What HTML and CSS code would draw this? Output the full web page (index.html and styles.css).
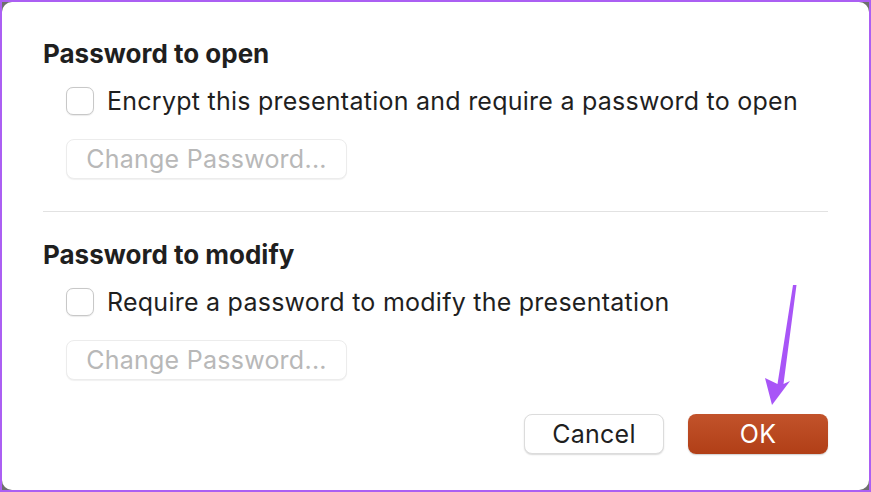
FILE: index.html
```html
<!DOCTYPE html>
<html>
<head>
<meta charset="utf-8">
<link rel="stylesheet" href="styles.css">
</head>
<body>
<div class="screen">
  <div class="dialog">
    <h2 class="heading first">Password to open</h2>
    <label class="check-row">
      <span class="checkbox"></span>
      <span class="check-label">Encrypt this presentation and require a password to open</span>
    </label>
    <button class="btn-disabled">Change Password...</button>
    <div class="separator"></div>
    <h2 class="heading second">Password to modify</h2>
    <label class="check-row">
      <span class="checkbox"></span>
      <span class="check-label">Require a password to modify the presentation</span>
    </label>
    <button class="btn-disabled">Change Password...</button>
    <div class="footer">
      <button class="btn btn-cancel">Cancel</button>
      <button class="btn btn-ok">OK</button>
    </div>
  </div>
  <svg class="arrow" width="871" height="492" viewBox="0 0 871 492">
    <polygon points="793,285 796.5,285 783.5,384 790,381 772,405 765,378 777.5,384" fill="#a855f7"/>
  </svg>
</div>
</body>
</html>
```
FILE: styles.css
```css
* { box-sizing: border-box; }
html, body { margin: 0; padding: 0; }
body { width: 871px; height: 492px; overflow: hidden; background: #fff; }
.screen {
  position: relative;
  width: 871px;
  height: 492px;
  border: 2px solid #ab5ff3;
  background: #6e6e6e;
  font-family: Inter, "Noto Sans", sans-serif;
  color: #1f1f1f;
}
.dialog {
  height: 100%;
  background: #fff;
  border-radius: 10px;
  padding: 37px 41px 0 41px;
  display: flex;
  flex-direction: column;
  align-items: flex-start;
}
.heading {
  margin: 0;
  font-size: 26px;
  line-height: 30px;
  font-weight: 700;
  color: #1f1f1f;
}
.heading.second { margin-top: 28px; }
.check-row {
  display: flex;
  align-items: center;
  margin-top: 17px;
  margin-left: 23px;
  height: 30px;
}
.checkbox {
  width: 28px;
  height: 28px;
  border: 1px solid #c8c8c8;
  border-radius: 7px;
  background: #fff;
  box-shadow: 0 0.5px 1px rgba(0,0,0,0.08);
}
.check-label {
  margin-left: 13px;
  font-size: 25px;
  letter-spacing: 0.25px;
  color: #1f1f1f;
}
.btn-disabled {
  margin-top: 23px;
  margin-left: 23px;
  width: 281px;
  height: 40px;
  border: 1px solid #ececec;
  border-radius: 8px;
  background: #fff;
  box-shadow: 0 1px 1px rgba(0,0,0,0.06);
  font-family: inherit;
  font-size: 25px;
  letter-spacing: 0.25px;
  color: #b8b8b8;
  padding: 0;
}
.separator {
  margin-top: 32px;
  align-self: stretch;
  height: 1px;
  background: #e2e2e2;
}
.footer {
  align-self: stretch;
  display: flex;
  justify-content: flex-end;
  gap: 24px;
  margin-top: 34px;
}
.btn {
  width: 140px;
  height: 40px;
  border-radius: 8px;
  font-family: inherit;
  font-size: 25px;
  letter-spacing: 0.25px;
  padding: 0;
}
.btn-cancel {
  background: #fff;
  border: 1px solid #dcdcdc;
  box-shadow: 0 1px 1.5px rgba(0,0,0,0.15);
  color: #1f1f1f;
}
.btn-ok {
  border: none;
  background: linear-gradient(#c2532b, #b13f17);
  color: #fff;
  box-shadow: 0 1px 1.5px rgba(0,0,0,0.2);
}
.arrow {
  position: absolute;
  left: -2px;
  top: -2px;
}
```
